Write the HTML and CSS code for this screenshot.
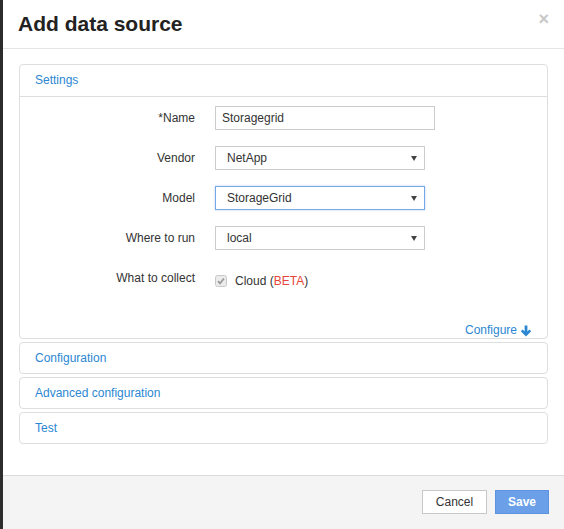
FILE: index.html
```html
<!DOCTYPE html>
<html>
<head>
<meta charset="utf-8">
<link rel="stylesheet" href="styles.css">
</head>
<body>
<div class="page">
  <div class="backdrop"></div>
  <div class="modal">
    <div class="modal-header">
      <h1 class="title">Add data source</h1>
      <span class="close">&times;</span>
    </div>
    <div class="modal-body">
      <div class="panel">
        <div class="panel-heading">Settings</div>
        <div class="panel-body">
          <div class="form">
            <label class="lbl">*Name</label>
            <div class="ctl"><div class="input wide">Storagegrid</div></div>
            <label class="lbl">Vendor</label>
            <div class="ctl"><div class="input select">NetApp<span class="caret"></span></div></div>
            <label class="lbl">Model</label>
            <div class="ctl"><div class="input select focus">StorageGrid<span class="caret"></span></div></div>
            <label class="lbl">Where to run</label>
            <div class="ctl"><div class="input select">local<span class="caret"></span></div></div>
            <label class="lbl">What to collect</label>
            <div class="ctl check-row">
              <svg class="checkbox" width="12" height="12" viewBox="0 0 12 12"><rect x="0.5" y="0.5" width="11" height="11" rx="2" fill="#ececec" stroke="#c8c8c8"/><path d="M3 6.2 L5 8.3 L9 3.5" fill="none" stroke="#9a9a9a" stroke-width="1.8"/></svg>
              <span class="cloud">Cloud (<span class="beta">BETA</span>)</span>
            </div>
          </div>
          <div class="configure">Configure <svg width="12" height="12" viewBox="0 0 12 12"><path d="M6 11.5 L0.8 6.3 L2.6 4.5 L4.6 6.5 L4.6 0.5 L7.4 0.5 L7.4 6.5 L9.4 4.5 L11.2 6.3 Z" fill="#2b87d3"/></svg></div>
        </div>
      </div>
      <div class="panel"><div class="panel-heading solo">Configuration</div></div>
      <div class="panel"><div class="panel-heading solo">Advanced configuration</div></div>
      <div class="panel"><div class="panel-heading solo">Test</div></div>
    </div>
    <div class="modal-footer">
      <button class="btn">Cancel</button>
      <button class="btn primary">Save</button>
    </div>
  </div>
</div>
</body>
</html>
```
FILE: styles.css
```css
* { box-sizing: border-box; }
html, body { margin: 0; padding: 0; }
body {
  background: #2c2c2c;
  font-family: "Liberation Sans", Arial, sans-serif;
  font-size: 12px;
  color: #333;
}
.page { display: flex; height: 529px; }
.backdrop { width: 3px; background: #2c2c2c; flex: none; }
.modal {
  flex: 1;
  background: #fff;
  display: flex;
  flex-direction: column;
}
.modal-header {
  height: 49px;
  border-bottom: 1px solid #e5e5e5;
  position: relative;
  padding: 0 15px;
}
.title {
  margin: 0;
  font-size: 21px;
  font-weight: bold;
  color: #222;
  line-height: 26px;
  padding-top: 11px;
}
.close {
  position: absolute;
  right: 15px;
  top: 9px;
  font-size: 18px;
  font-weight: bold;
  color: #c8c8c8;
  line-height: 20px;
}
.modal-body {
  padding: 15px 16px 30px;
  display: flex;
  flex-direction: column;
  gap: 3px;
  flex: 1;
}
.panel {
  border: 1px solid #dedede;
  border-radius: 4px;
  background: #fff;
}
.panel-heading {
  height: 32px;
  line-height: 30px;
  padding-left: 15px;
  color: #2b87d3;
  border-bottom: 1px solid #dedede;
  font-size: 12px;
}
.panel-heading.solo { border-bottom: none; height: 30px; }
.panel-body { padding: 9px 15px 0 0; }
.form {
  display: grid;
  grid-template-columns: 175px 1fr;
  column-gap: 20px;
  row-gap: 16px;
}
.lbl {
  text-align: right;
  line-height: 24px;
  color: #333;
}
.ctl { display: flex; }
.input {
  height: 24px;
  border: 1px solid #ccc;
  line-height: 22px;
  padding-left: 6px;
  color: #333;
  position: relative;
  width: 210px;
}
.input.wide { width: 220px; }
.input.select { padding-left: 11px; }
.input.focus { border-color: #74a8e6; box-shadow: 0 0 2px rgba(102,160,233,0.5); }
.caret {
  position: absolute;
  right: 7px;
  top: 9px;
  width: 0; height: 0;
  border-left: 3px solid transparent;
  border-right: 3px solid transparent;
  border-top: 5px solid #444;
}
.check-row { align-items: center; padding-top: 6px; height: 24px; }
.checkbox { flex: none; }
.cloud { margin-left: 8px; }
.beta { color: #e5443a; }
.configure {
  margin-top: 33px;
  line-height: 15px;
  height: 15px;
  text-align: right;
  color: #2b87d3;
  display: flex;
  justify-content: flex-end;
  align-items: center;
  gap: 3px;
}
.modal-footer {
  height: 54px;
  background: #f4f4f4;
  border-top: 1px solid #dcdcdc;
  display: flex;
  justify-content: flex-end;
  align-items: flex-start;
  padding: 14px 15px 0 0;
  gap: 8px;
}
.btn {
  font-family: "Liberation Sans", Arial, sans-serif;
  font-size: 12px;
  height: 24px;
  border: 1px solid #c8c8c8;
  background: #fff;
  color: #333;
  padding: 0;
  width: 65px;
  border-radius: 0;
}
.btn.primary {
  width: 54px;
  background: #6ba0e8;
  border-color: #5c92de;
  color: #fff;
  font-weight: bold;
}
```
